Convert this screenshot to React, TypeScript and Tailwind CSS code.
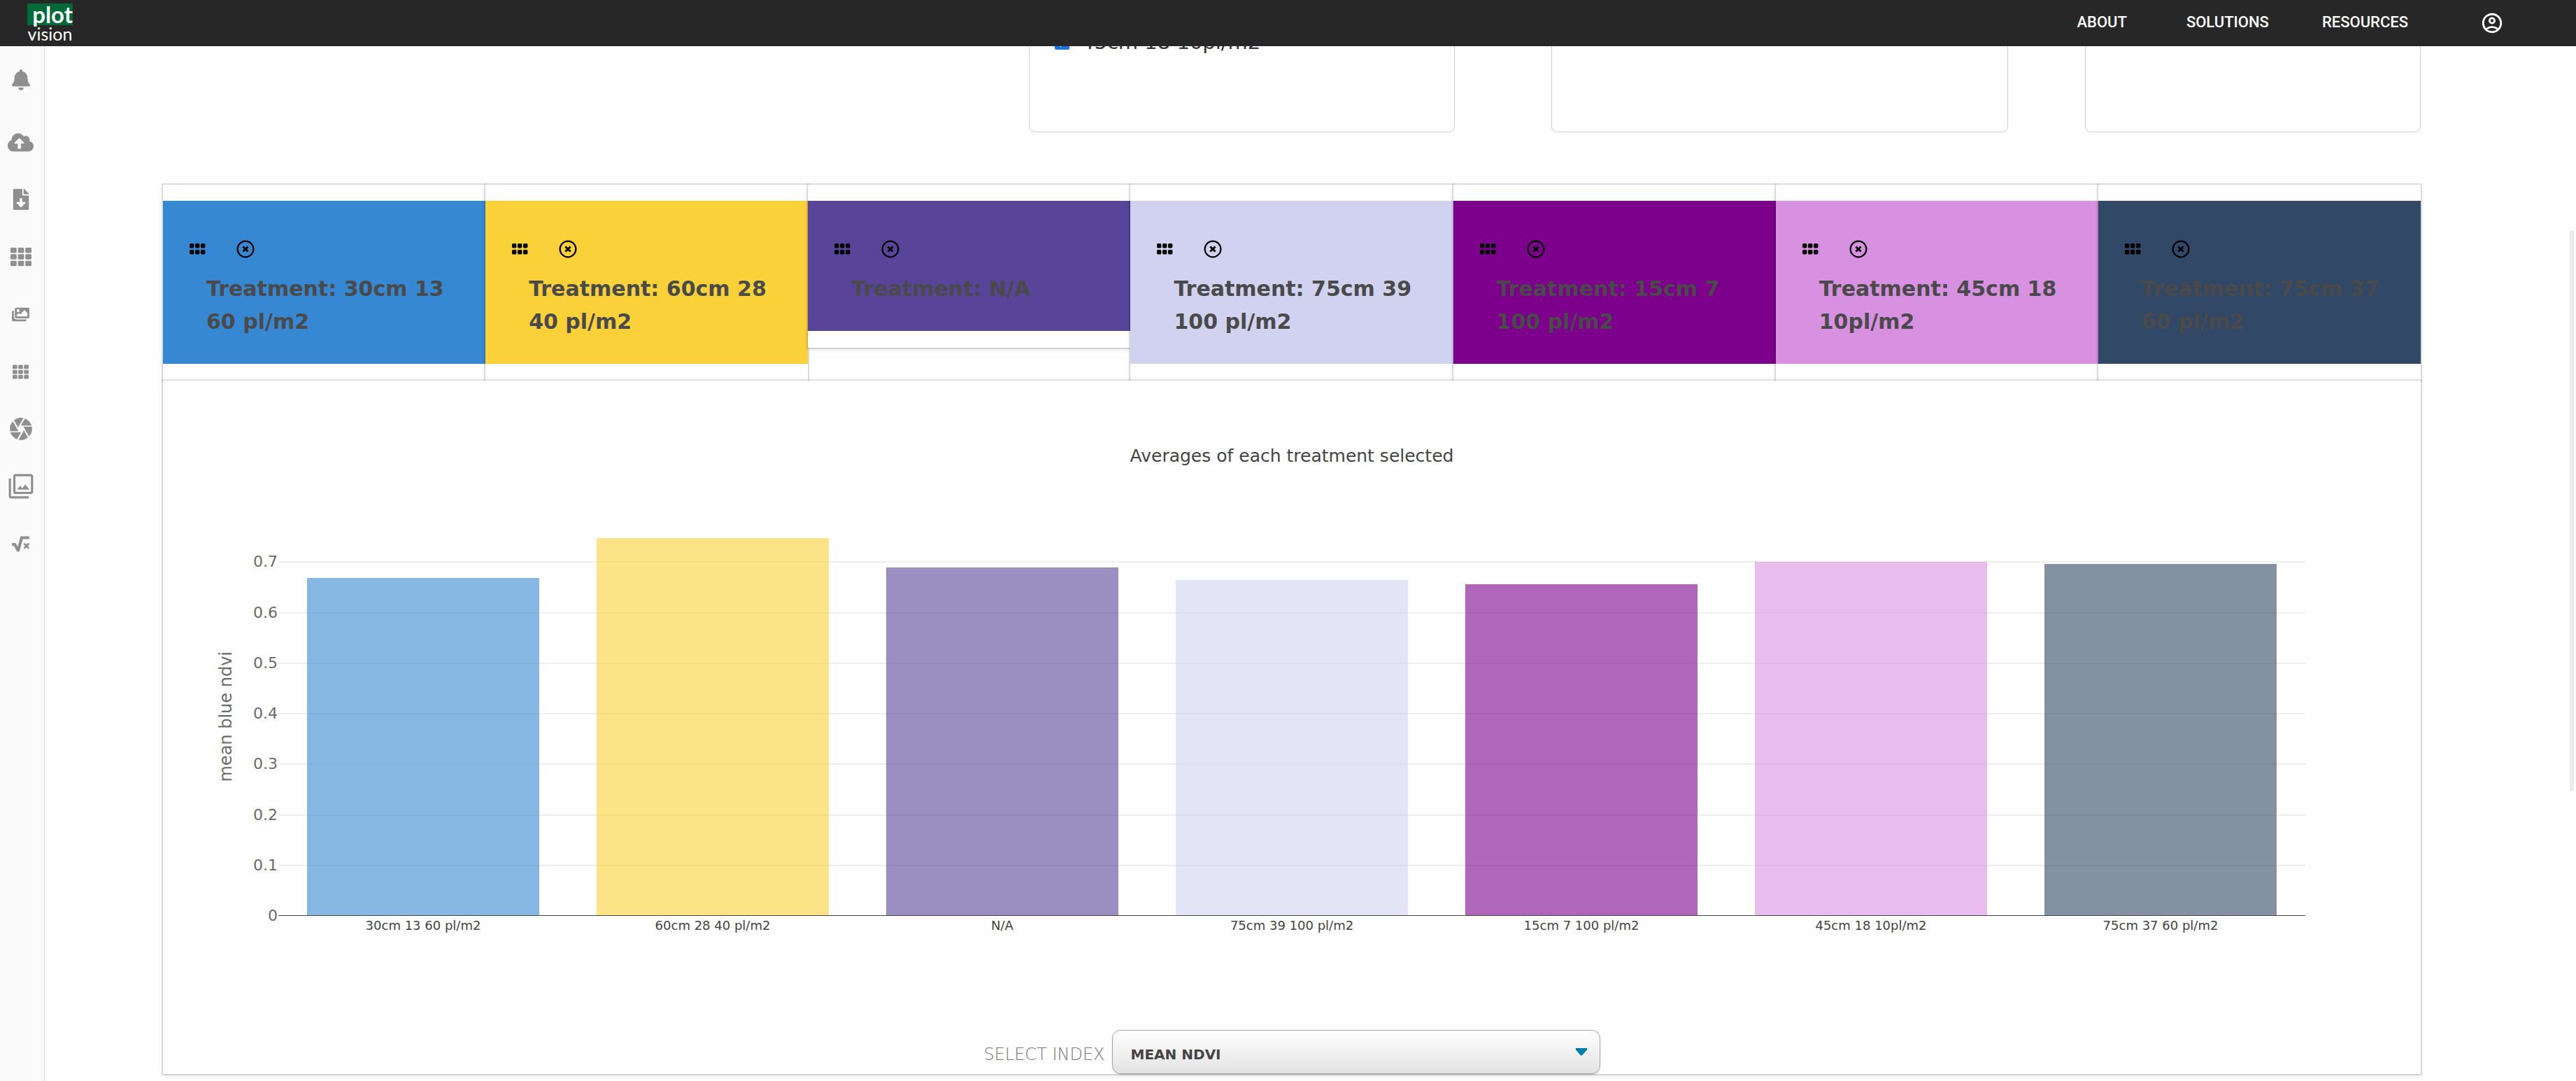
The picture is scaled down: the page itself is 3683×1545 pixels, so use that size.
import React, { useId } from "react";
import {
  FaBell,
  FaCloudUploadAlt,
  FaFileDownload,
  FaImages,
  FaSquareRootAlt,
  FaTh,
} from "react-icons/fa";
import { MdCamera, MdFilter, MdOutlineAccountCircle } from "react-icons/md";

type Treatment = { name: string; color: string; value: number };

const treatments: Treatment[] = [
  { name: "30cm 13 60 pl/m2", color: "#3788d2", value: 0.668 },
  { name: "60cm 28 40 pl/m2", color: "#fad139", value: 0.748 },
  { name: "N/A", color: "#58459a", value: 0.689 },
  { name: "75cm 39 100 pl/m2", color: "#d1d2ef", value: 0.664 },
  { name: "15cm 7 100 pl/m2", color: "#7c008b", value: 0.6555 },
  { name: "45cm 18 10pl/m2", color: "#d890e1", value: 0.7 },
  { name: "75cm 37 60 pl/m2", color: "#314866", value: 0.6965 },
];

const axisMax = 0.8;
const ticks = [0.7, 0.6, 0.5, 0.4, 0.3, 0.2, 0.1, 0];

const sideLinks = [
  { label: "Upload", icon: <FaCloudUploadAlt size={37} /> },
  { label: "Downloads", icon: <FaFileDownload size={30} /> },
  { label: "Plots", icon: <FaTh size={30} /> },
  { label: "Images", icon: <FaImages size={25} /> },
  { label: "Small plots", icon: <FaTh size={23} /> },
  { label: "Camera", icon: <MdCamera size={38} /> },
  { label: "Gallery", icon: <MdFilter size={38} /> },
  { label: "Formulas", icon: <FaSquareRootAlt size={25} /> },
];

function Logo() {
  return (
    <a
      href="#home"
      aria-label="plot vision"
      className="ml-[39px] flex w-[65px] flex-col pt-[5px] font-[Lato,sans-serif] text-white"
    >
      <span className="flex h-[31px] justify-end bg-[#006937] text-[33px] leading-[31px] font-bold">
        plot
      </span>
      <span className="text-center text-[25px] leading-[24px]">vision</span>
    </a>
  );
}

function Header() {
  return (
    <header className="relative z-10 flex h-[66px] items-start justify-between bg-[#272727]">
      <Logo />
      <nav className="flex h-full items-center pr-[103px] font-[Roboto,sans-serif] text-[22px] leading-[64px] font-medium text-white">
        <a href="#about" className="mr-[85px] h-full">
          ABOUT
        </a>
        <a href="#solutions" className="mr-[76px] h-full">
          SOLUTIONS
        </a>
        <a href="#resources" className="mr-[103px] h-full">
          RESOURCES
        </a>
        <button type="button" aria-label="Account">
          <MdOutlineAccountCircle size={34} />
        </button>
      </nav>
    </header>
  );
}

function Sidebar() {
  return (
    <aside className="flex w-[64px] shrink-0 flex-col border-r border-[#dcdcdc] bg-[#fafafa] pr-[4px] text-[#8f8f8f]">
      <a
        href="#notifications"
        aria-label="Notifications"
        className="flex h-24 items-center justify-center"
      >
        <FaBell size={30} />
      </a>
      {sideLinks.map((item) => (
        <a
          key={item.label}
          href="#tool"
          aria-label={item.label}
          className="flex h-[82px] items-center justify-center"
        >
          {item.icon}
        </a>
      ))}
    </aside>
  );
}

function FilterCards() {
  return (
    <section className="ml-[1238px] flex h-[123px]">
      <div className="-mt-6 w-[609px] rounded-lg border border-[#cfcfcf] px-[36px]">
        <label className="flex items-center text-[29px] leading-[34px] text-[#333]">
          <input
            type="checkbox"
            defaultChecked
            className="mr-[17px] size-[21px] accent-[#1a73e8]"
          />
          45cm 18 10pl/m2
        </label>
      </div>
      <div className="-mt-6 ml-[138px] w-[653px] rounded-lg border border-[#cfcfcf]" />
      <div className="-mt-6 ml-[110px] flex-1 rounded-lg border border-[#cfcfcf]" />
    </section>
  );
}

function DragDots() {
  return (
    <svg width="24" height="24" viewBox="0 0 24 24" aria-hidden="true">
      {[5, 14].map((y) =>
        [1, 9, 17].map((x) => (
          <rect key={`${x}-${y}`} x={x} y={y} width="6.4" height="6.4" rx="1.6" />
        )),
      )}
    </svg>
  );
}

function CloseCircle() {
  return (
    <svg
      width="26"
      height="26"
      viewBox="0 0 26 26"
      fill="none"
      stroke="currentColor"
      strokeWidth="2.2"
      aria-hidden="true"
    >
      <circle cx="13" cy="13" r="11.4" />
      <path d="M9.4 9.4l7.2 7.2M16.6 9.4l-7.2 7.2" strokeWidth="2.8" />
    </svg>
  );
}

function TreatmentCard({ name, color }: Treatment) {
  return (
    <article className="bg-[#fefefe] pt-[23px] pb-[24px] shadow-[0_0_0_2px_rgba(0,0,0,0.11),0_3px_6px_rgba(0,0,0,0.1)]">
      <div
        className="pt-[56px] pr-[45px] pb-[37px] pl-[62px]"
        style={{ backgroundColor: color }}
      >
        <div className="-ml-[25px] flex h-[46px] items-start gap-[44px] text-black">
          <button type="button" aria-label={`Move ${name}`}>
            <DragDots />
          </button>
          <button type="button" aria-label={`Remove ${name}`}>
            <CloseCircle />
          </button>
        </div>
        <h2 className="text-[30px] leading-[47px] font-bold text-[#4a4a4a]">
          {`Treatment: ${name}`}
        </h2>
      </div>
    </article>
  );
}

function Chart() {
  return (
    <figure className="flex flex-col">
      <figcaption className="pt-[88px] text-center text-[25px] leading-[40px] text-[#444]">
        Averages of each treatment selected
      </figcaption>
      <div className="flex pt-[59px] pr-[165px] pl-[73px]">
        <div className="flex w-[34px] items-center justify-center pt-2">
          <span className="rotate-180 text-[24px] leading-[34px] whitespace-nowrap text-[#6b6b6b] [writing-mode:vertical-rl]">
            mean blue ndvi
          </span>
        </div>
        <div className="relative ml-[58px] h-[578px] flex-1">
          {ticks.map((tick) => (
            <div
              key={tick}
              className={
                tick === 0
                  ? "absolute inset-x-0 z-10 h-px bg-[#444]"
                  : "absolute inset-x-0 -mb-px h-[2px] bg-[#eee]"
              }
              style={{ bottom: `${(tick / axisMax) * 100}%` }}
            >
              <span className="absolute -top-4 right-full pr-px text-[22px] leading-[34px] text-[#6b6b6b]">
                {tick}
              </span>
            </div>
          ))}
          <div className="relative grid h-full grid-cols-7 items-end">
            {treatments.map((t) => (
              <div
                key={t.name}
                className="mx-[10%] opacity-60"
                style={{
                  backgroundColor: t.color,
                  height: `${(t.value / axisMax) * 578}px`,
                }}
              />
            ))}
          </div>
        </div>
      </div>
      <div className="grid grid-cols-7 pr-[165px] pl-[165px] text-center text-[18px] leading-[28px] text-[#444]">
        {treatments.map((t) => (
          <span key={t.name}>{t.name}</span>
        ))}
      </div>
    </figure>
  );
}

function IndexSelect() {
  const id = useId();
  return (
    <div className="flex items-end justify-center pt-[135px]">
      <label
        htmlFor={id}
        className="pb-[12px] text-[24px] leading-[32px] font-extralight text-[#777]"
      >
        SELECT INDEX
      </label>
      <div className="relative ml-[10px]">
        <select
          id={id}
          className="h-[63px] w-[698px] appearance-none rounded-xl border border-[#a5a5a5] bg-linear-to-b from-white to-[#e3e3e3] pt-[6px] pl-[26px] text-[20px] font-bold text-[#444] shadow-[0_1px_2px_rgba(0,0,0,0.15)]"
        >
          <option>MEAN NDVI</option>
        </select>
        <svg
          className="pointer-events-none absolute top-[26px] right-[19px]"
          width="16"
          height="11"
          viewBox="0 0 16 11"
          fill="#007cb2"
          aria-hidden="true"
        >
          <path d="M0 0h16v2.5L8.8 10.5H7.2L0 2.5z" />
        </svg>
      </div>
    </div>
  );
}

export default function App() {
  return (
    <div className="flex h-screen flex-col overflow-hidden bg-[#fefefe] font-['DejaVu_Sans',sans-serif]">
      <Header />
      <div className="flex min-h-0 flex-1">
        <Sidebar />
        <main className="flex-1 pr-[213px] pl-[169px]">
          <FilterCards />
          <section className="mt-[75px] grid grid-cols-7 items-start">
            {treatments.map((t) => (
              <TreatmentCard key={t.name} {...t} />
            ))}
          </section>
          <section className="relative bg-[#fefefe] shadow-[0_0_0_2px_rgba(0,0,0,0.11),0_3px_6px_rgba(0,0,0,0.1)]">
            <Chart />
            <IndexSelect />
          </section>
        </main>
        <div className="mt-[263px] mr-[3px] h-[802px] w-[6px] rounded-full bg-[#ebebeb]" />
      </div>
    </div>
  );
}
